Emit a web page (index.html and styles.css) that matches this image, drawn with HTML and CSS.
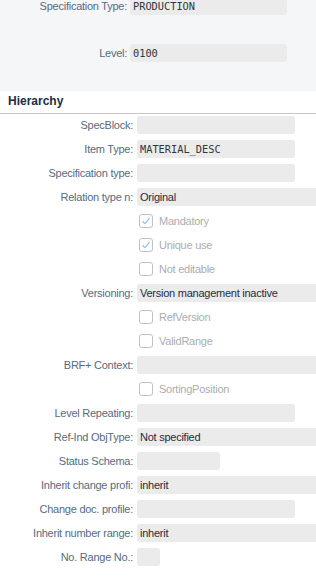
FILE: index.html
```html
<!DOCTYPE html>
<html lang="en">
<head>
    <meta charset="UTF-8">
    <meta name="viewport" content="width=device-width, initial-scale=1.0">
    <title>Specification - Hierarchy</title>
    <link rel="stylesheet" href="styles.css">
</head>
<body>
    <div class="head-form">
        <div class="head-row">
            <span class="head-label">Specification Type:</span>
            <span class="field mono">PRODUCTION</span>
        </div>
        <div class="head-row">
            <span class="head-label">Level:</span>
            <span class="field mono">0100</span>
        </div>
    </div>

    <div class="section-title">Hierarchy</div>

    <div class="form">
        <span class="label">SpecBlock:</span>
        <span class="field"></span>

        <span class="label">Item Type:</span>
        <span class="field mono">MATERIAL_DESC</span>

        <span class="label">Specification type:</span>
        <span class="field"></span>

        <span class="label">Relation type n:</span>
        <span class="field wide">Original</span>

        <span class="label"></span>
        <span class="check checked">Mandatory</span>

        <span class="label"></span>
        <span class="check checked">Unique use</span>

        <span class="label"></span>
        <span class="check">Not editable</span>

        <span class="label">Versioning:</span>
        <span class="field wide">Version management inactive</span>

        <span class="label"></span>
        <span class="check">RefVersion</span>

        <span class="label"></span>
        <span class="check">ValidRange</span>

        <span class="label">BRF+ Context:</span>
        <span class="field wide"></span>

        <span class="label"></span>
        <span class="check">SortingPosition</span>

        <span class="label">Level Repeating:</span>
        <span class="field"></span>

        <span class="label">Ref-Ind ObjType:</span>
        <span class="field wide">Not specified</span>

        <span class="label">Status Schema:</span>
        <span class="field short"></span>

        <span class="label">Inherit change profi:</span>
        <span class="field wide">inherit</span>

        <span class="label">Change doc. profile:</span>
        <span class="field"></span>

        <span class="label">Inherit number range:</span>
        <span class="field wide">inherit</span>

        <span class="label">No. Range No.:</span>
        <span class="field tiny"></span>
    </div>
</body>
</html>
```

FILE: styles.css
```css
:root {
    --label-color: #556b82;
    --text-color: #32363a;
    --field-bg: #ebebeb;
    --head-bg: #f5f6f7;
    --disabled: #a9adb2;
}

* {
    margin: 0;
    padding: 0;
    box-sizing: border-box;
}

body {
    font-family: "Liberation Sans", Arial, sans-serif;
    font-size: 11px;
    letter-spacing: -0.25px;
    color: var(--text-color);
    background: #fff;
    overflow: hidden;
}

.head-form {
    background: var(--head-bg);
    height: 94px;
    margin-top: -3px;
}

.head-row {
    display: grid;
    grid-template-columns: 127px 157px;
    column-gap: 3px;
    align-items: center;
    height: 18px;
    margin-bottom: 29px;
}

.head-label,
.label {
    text-align: right;
    color: var(--label-color);
    white-space: nowrap;
}

.field {
    display: flex;
    align-items: center;
    height: 18px;
    background: var(--field-bg);
    border-radius: 3px;
    padding: 0 3px;
    white-space: nowrap;
    overflow: hidden;
    color: #1d2d3e;
}

.mono {
    font-family: "DejaVu Sans Mono", "Liberation Mono", monospace;
    font-size: 10.3px;
    letter-spacing: 0;
    color: #32363a;
}

.section-title {
    height: 23px;
    padding: 2px 8px 0;
    font-weight: bold;
    font-size: 12px;
    letter-spacing: 0;
    color: #1d2d3e;
    border-bottom: 1px solid #c6c6c6;
    line-height: 17px;
}

.form {
    display: grid;
    grid-template-columns: 133px 1fr;
    column-gap: 4px;
    row-gap: 6px;
    padding-top: 2px;
    align-items: center;
}

.form .field {
    width: 158px;
}

.form .field.wide {
    width: auto;
    border-radius: 3px 0 0 3px;
}

.form .field.short {
    width: 83px;
}

.form .field.tiny {
    width: 23px;
}

.check {
    display: flex;
    align-items: center;
    height: 18px;
    color: var(--disabled);
    padding-left: 2px;
}

.check::before {
    content: "";
    width: 12px;
    height: 12px;
    border: 1px solid #bcc3ca;
    border-radius: 3px;
    margin-right: 6px;
    flex-shrink: 0;
    background-position: center;
    background-repeat: no-repeat;
}

.check.checked::before {
    background-image: url("data:image/svg+xml,%3Csvg xmlns='http://www.w3.org/2000/svg' width='10' height='10' viewBox='0 0 10 10'%3E%3Cpath d='M1.5 5.2 L4 7.6 L8.6 2.2' fill='none' stroke='%2391c3f0' stroke-width='1.2'/%3E%3C/svg%3E");
}
```
